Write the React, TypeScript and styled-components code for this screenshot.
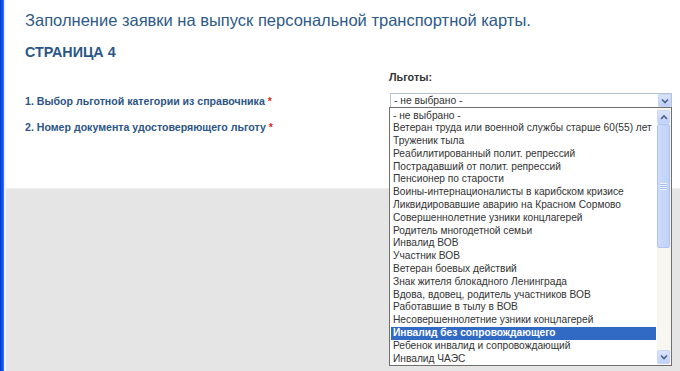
import React from 'react';
import styled, { createGlobalStyle } from 'styled-components';

const GlobalStyle = createGlobalStyle`
  html, body {
    margin: 0;
    padding: 0;
    background: #ffffff;
  }
  body {
    font-family: "Liberation Sans", Arial, sans-serif;
  }
`;

const Page = styled.div`
  display: flex;
  width: 680px;
  height: 371px;
  overflow: hidden;
  position: relative;
`;

const EdgeStrip = styled.div`
  width: 6px;
  flex-shrink: 0;
  background: linear-gradient(
    to right,
    #0b2c9e 0px,
    #0a4ae6 1px,
    #0757ff 3px,
    #5a8cff 4px,
    #e4ecfb 4px,
    #f2f6fd 6px
  );
`;

const Main = styled.div`
  flex: 1;
  display: flex;
  flex-direction: column;
`;

const Content = styled.div`
  height: 188px;
  box-sizing: border-box;
  padding: 10px 0 0 19px;
  background: #ffffff;
`;

const Footer = styled.div`
  flex: 1;
  background: #e5e5e5;
  border-top: 1px solid #eeeeee;
`;

const Title = styled.h1`
  margin: 0;
  font-size: 16.5px;
  line-height: 20px;
  font-weight: normal;
  color: #2d5a88;
`;

const PageNumber = styled.h2`
  margin: 13px 0 0;
  font-size: 14.3px;
  line-height: 18px;
  font-weight: bold;
  color: #2b5787;
`;

const Form = styled.div`
  display: grid;
  grid-template-columns: 364px 283px;
  grid-template-rows: 22px 15px 37px;
  margin-top: 10px;
`;

const FieldLabel = styled.div`
  font-size: 10.6px;
  font-weight: bold;
  color: #2b5585;
  align-self: center;
`;

const Required = styled.span`
  color: #d42a2a;
`;

const CaptionLabel = styled.div`
  font-size: 10.8px;
  font-weight: bold;
  color: #333333;
  align-self: start;
`;

const SelectBox = styled.div`
  display: flex;
  align-items: stretch;
  height: 15px;
  box-sizing: border-box;
  border: 1px solid #b6c3d6;
  background: #ffffff;
  margin-left: 1px;
  font-size: 10.3px;
  color: #333333;
`;

const SelectValue = styled.div`
  flex: 1;
  line-height: 13px;
  padding-left: 3px;
`;

const ArrowButton = styled.div`
  width: 13px;
  flex-shrink: 0;
  display: flex;
  align-items: center;
  justify-content: center;
  box-sizing: border-box;
  background: linear-gradient(#d8e3fd, #bccffa);
  border: 1px solid #c6d4f6;
  border-radius: 1px;
`;

const List = styled.div`
  position: absolute;
  left: 389px;
  top: 107px;
  width: 283px;
  height: 259px;
  box-sizing: border-box;
  border: 1px solid #6f6f6f;
  background: #ffffff;
  display: flex;
`;

const Options = styled.div`
  flex: 1;
  min-width: 0;
  overflow: hidden;
  padding: 1.5px 1px 0 1px;
`;

const Option = styled.div<{ $selected?: boolean }>`
  font-size: 10.2px;
  line-height: 12.8px;
  height: 12.8px;
  padding-left: 2px;
  white-space: nowrap;
  color: ${p => (p.$selected ? '#ffffff' : '#333333')};
  background: ${p => (p.$selected ? '#316ac5' : 'transparent')};
  font-weight: ${p => (p.$selected ? 'bold' : 'normal')};
`;

const Scrollbar = styled.div`
  width: 14px;
  flex-shrink: 0;
  display: flex;
  flex-direction: column;
  background: #f7f6f0;
  padding: 2px 1px 1px 0;
  box-sizing: border-box;
`;

const ScrollButton = styled.div`
  height: 14px;
  flex-shrink: 0;
  display: flex;
  align-items: center;
  justify-content: center;
  box-sizing: border-box;
  background: linear-gradient(#dbe5fd, #bfd1fb);
  border: 1px solid #c9d6f5;
  border-radius: 2px;
`;

const Track = styled.div`
  flex: 1;
  display: flex;
  flex-direction: column;
`;

const Thumb = styled.div`
  height: 124px;
  box-sizing: border-box;
  background: linear-gradient(to right, #cddbfb, #c0d2fa);
  border: 1px solid #b0c4f2;
  border-radius: 2px;
  display: flex;
  align-items: center;
  justify-content: center;
`;

const Grip = styled.div`
  width: 7px;
  height: 7px;
  background: repeating-linear-gradient(
    to bottom,
    #eef3ff 0px,
    #eef3ff 1px,
    #a8bdea 1px,
    #a8bdea 2px
  );
`;

const Chevron: React.FC<{ up?: boolean }> = ({ up }) => (
  <svg width="8" height="6" viewBox="0 0 8 6">
    <path
      d={up ? 'M1 5 L4 2 L7 5' : 'M1 1.5 L4 4.5 L7 1.5'}
      fill="none"
      stroke="#4d6185"
      strokeWidth="1.6"
    />
  </svg>
);

const options = [
  '- не выбрано -',
  'Ветеран труда или военной службы старше 60(55) лет',
  'Труженик тыла',
  'Реабилитированный полит. репрессий',
  'Пострадавший от полит. репрессий',
  'Пенсионер по старости',
  'Воины-интернационалисты в карибском кризисе',
  'Ликвидировавшие аварию на Красном Сормово',
  'Совершеннолетние узники концлагерей',
  'Родитель многодетной семьи',
  'Инвалид ВОВ',
  'Участник ВОВ',
  'Ветеран боевых действий',
  'Знак жителя блокадного Ленинграда',
  'Вдова, вдовец, родитель участников ВОВ',
  'Работавшие в тылу в ВОВ',
  'Несовершеннолетние узники концлагерей',
  'Инвалид без сопровождающего',
  'Ребенок инвалид и сопровождающий',
  'Инвалид ЧАЭС',
];

const App: React.FC = () => {
  const selected = 'Инвалид без сопровождающего';

  return (
    <>
      <GlobalStyle />
      <Page>
        <EdgeStrip />
        <Main>
          <Content>
            <Title>Заполнение заявки на выпуск персональной транспортной карты.</Title>
            <PageNumber>СТРАНИЦА 4</PageNumber>
            <Form>
              <div />
              <CaptionLabel>Льготы:</CaptionLabel>
              <FieldLabel>
                1. Выбор льготной категории из справочника <Required>*</Required>
              </FieldLabel>
              <SelectBox>
                <SelectValue>- не выбрано -</SelectValue>
                <ArrowButton>
                  <Chevron />
                </ArrowButton>
              </SelectBox>
              <FieldLabel>
                2. Номер документа удостоверяющего льготу <Required>*</Required>
              </FieldLabel>
              <div />
            </Form>
          </Content>
          <Footer />
        </Main>

        {/* opened dropdown list lies over the form */}
        <List>
          <Options>
            {options.map(o => (
              <Option key={o} $selected={o === selected}>
                {o}
              </Option>
            ))}
          </Options>
          <Scrollbar>
            <ScrollButton>
              <Chevron up />
            </ScrollButton>
            <Track>
              <Thumb>
                <Grip />
              </Thumb>
            </Track>
            <ScrollButton>
              <Chevron />
            </ScrollButton>
          </Scrollbar>
        </List>
      </Page>
    </>
  );
};

export default App;
